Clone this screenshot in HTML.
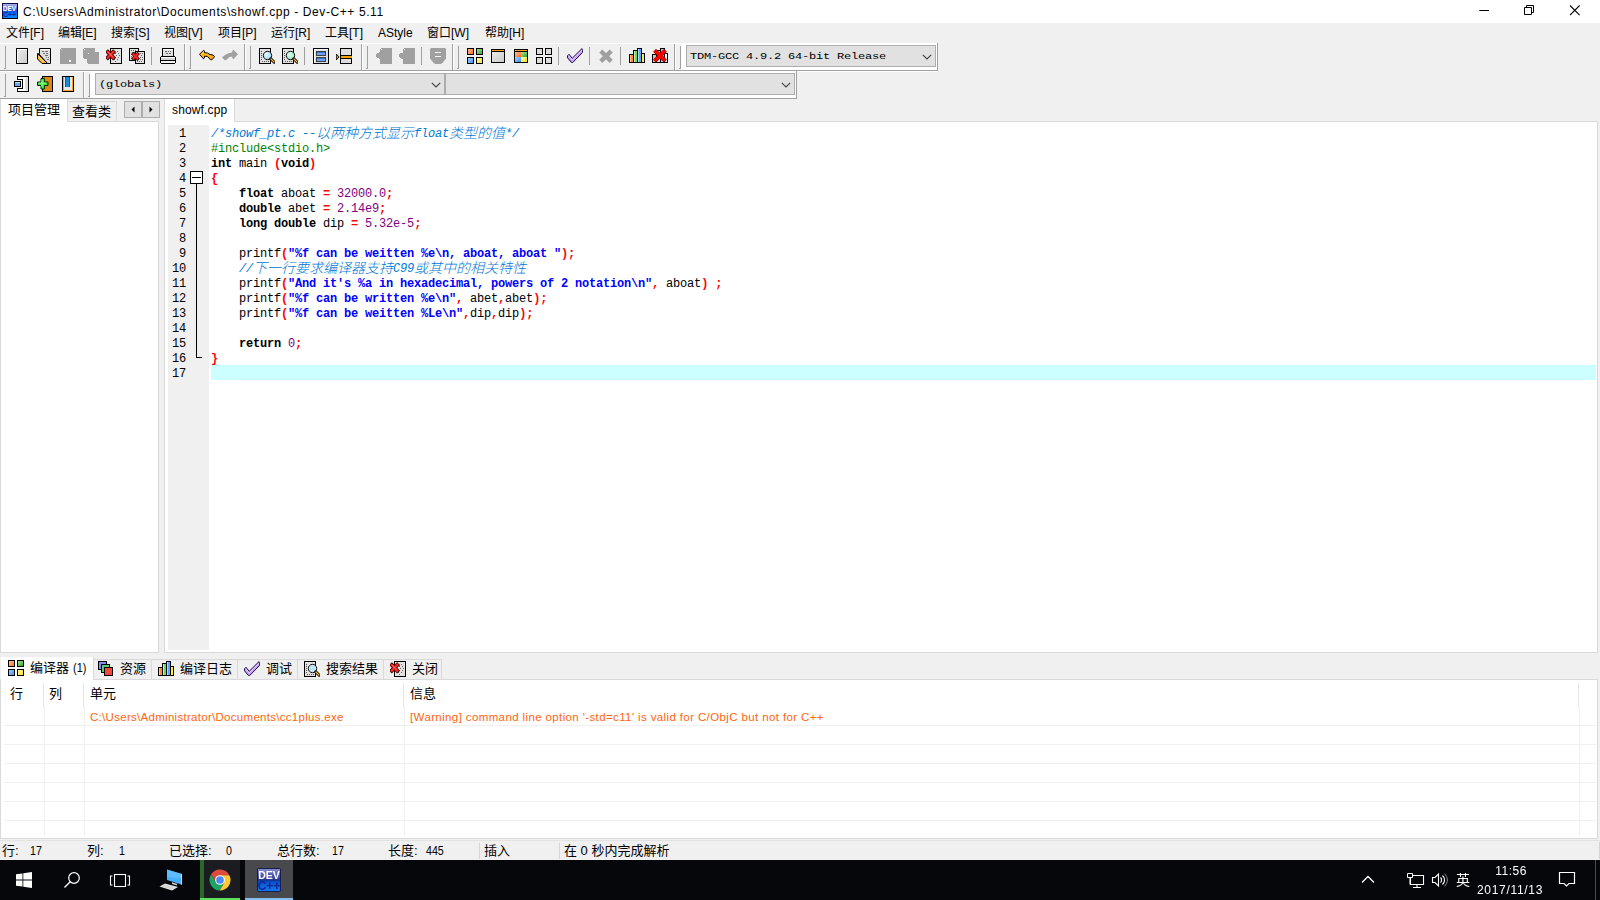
<!DOCTYPE html>
<html lang="zh-CN">
<head>
<meta charset="utf-8">
<title>Dev-C++ 5.11</title>
<style>
*{box-sizing:border-box;margin:0;padding:0}
html,body{width:1600px;height:900px;overflow:hidden;background:#f0f0f0}
body{position:relative;font-family:"Liberation Sans","Noto Sans CJK SC",sans-serif;font-size:12px;color:#000;line-height:1}
.abs{position:absolute}
.t{position:absolute;white-space:pre;line-height:16px;height:16px}
/* title bar */
#title{left:0;top:0;width:1600px;height:23px;background:#fff}
#title .t{left:23px;top:4px;font-size:12px;letter-spacing:0.6px}
/* menu */
#menu{left:0;top:23px;width:1600px;height:20px;background:#f0f0f0}
#menu .t{top:2px}
/* toolbars */
#tb1{left:0;top:43px;width:1600px;height:28px}
#tb2{left:0;top:71px;width:1600px;height:28px}
.hl{position:absolute;height:1px}
.vl{position:absolute;width:1px}
.grip{position:absolute;width:3px;height:23px}
.grip:before{content:"";position:absolute;left:1px;top:0;width:1px;height:22px;background:#a0a0a0}
.grip:after{content:"";position:absolute;left:0;top:22px;width:2px;height:1px;background:#a0a0a0}
.ico{position:absolute;width:16px;height:16px}
.combo{position:absolute;background:#e1e1e1;border:1px solid #adadad;font-family:"Liberation Mono",monospace;font-size:12px;letter-spacing:-0.2px}
.combo .t{left:3px;top:2px;transform:scaleY(0.82);transform-origin:0 12px}
.combo svg{position:absolute;right:3px;top:8px}
.frame{position:absolute;border:1px solid #a0a0a0;border-left-color:#fff;border-top-color:#fff;box-shadow:-1px -1px 0 #a0a0a0, 1px 1px 0 #fff}
/* panels */
.tab{position:absolute;font-size:13px}
.mono{font-family:"Liberation Mono","Noto Sans CJK SC",monospace}
/* code */
#code{left:211px;top:127px;font-family:"Liberation Mono","Noto Sans CJK SC",monospace;font-size:12px;letter-spacing:-0.2px;line-height:15px}
#code div{height:15px;white-space:pre}
#nums{left:168px;top:127px;width:18px;text-align:right;font-family:"Liberation Mono",monospace;font-size:12px;letter-spacing:-0.2px;line-height:15px}
#nums div{height:15px}
.k{font-weight:bold}
.s{color:#0000ff;font-weight:bold}
.y{color:#ff0000;font-weight:bold}
.n{color:#800080}
.p{color:#008000}
.c{color:#0078d7;font-style:italic}
.cj{line-height:0;font-weight:300;font-size:14px;letter-spacing:0;position:relative;top:1px;font-family:"Noto Sans CJK SC",sans-serif}
.bt{font-size:13px;line-height:17px;height:17px}
.itab{top:4px;height:21px;background:#f0f0f0;border:1px solid #d9d9d9;border-left:none}
.st{top:2px;font-size:13px;line-height:17px;height:17px}
.sn{font-size:13px;transform:scaleX(.82);transform-origin:0 0}
/* taskbar */
#task{left:0;top:860px;width:1600px;height:40px;background:#05070b;color:#fff;will-change:transform;transform:translateZ(0)}
</style>
</head>
<body>
<svg width="0" height="0" style="position:absolute"><defs>
<linearGradient id="sqo" x1="0" y1="0" x2="1" y2="1"><stop offset="0" stop-color="#ffc49a"/><stop offset="1" stop-color="#ff6a1a"/></linearGradient>
<linearGradient id="sqg" x1="0" y1="0" x2="1" y2="1"><stop offset="0" stop-color="#a8ec98"/><stop offset="1" stop-color="#2ca02c"/></linearGradient>
<linearGradient id="sqb" x1="0" y1="0" x2="1" y2="1"><stop offset="0" stop-color="#a8d4ff"/><stop offset="1" stop-color="#3c8cf0"/></linearGradient>
<linearGradient id="sqy" x1="0" y1="0" x2="1" y2="1"><stop offset="0" stop-color="#ffffa8"/><stop offset="1" stop-color="#f4e020"/></linearGradient>
</defs></svg>

<!-- TITLE BAR -->
<div id="title" class="abs">
  <svg class="abs" style="left:2px;top:3px" width="16" height="16" viewBox="0 0 16 16">
    <defs><linearGradient id="tg" x1="0" y1="0" x2="0" y2="1"><stop offset="0" stop-color="#b4b4ec"/><stop offset=".5" stop-color="#2046c0"/><stop offset=".55" stop-color="#1060e8"/><stop offset="1" stop-color="#1088ff"/></linearGradient></defs>
    <rect x="0" y="0" width="16" height="16" fill="#0c0c48"/><rect x="15" y="1" width="1" height="15" fill="#000"/><rect x="0" y="15" width="16" height="1" fill="#000"/>
    <rect x="1" y="1" width="14" height="14" fill="url(#tg)"/>
    <text x="7.500" y="7.600" font-family="Liberation Sans,sans-serif" font-weight="bold" font-size="6.500" fill="#fff" text-anchor="middle">DEV</text>
    <text x="7.500" y="14" font-family="Liberation Sans,sans-serif" font-weight="bold" font-size="7" fill="#0a2aa0" text-anchor="middle">C++</text>
  </svg>
  <div class="t">C:\Users\Administrator\Documents\showf.cpp - Dev-C++ 5.11</div>
  <svg class="abs" style="left:1470px;top:0" width="130" height="23" viewBox="0 0 130 23">
    <path d="M9.300 10.500h9.700" stroke="#000" stroke-width="1" fill="none"/>
    <path d="M54.5 7.5h7v7h-7z M56.5 7.5v-2h7v7h-2" stroke="#000" stroke-width="1" fill="none"/>
    <path d="M100 5.500l9.600 9.600 M109.600 5.500l-9.600 9.600" stroke="#000" stroke-width="1.1" fill="none"/>
  </svg>
</div>

<!-- MENU BAR -->
<div id="menu" class="abs">
  <div class="t" style="left:6px">文件[F]</div>
  <div class="t" style="left:58px">编辑[E]</div>
  <div class="t" style="left:111px">搜索[S]</div>
  <div class="t" style="left:164px">视图[V]</div>
  <div class="t" style="left:218px">项目[P]</div>
  <div class="t" style="left:271px">运行[R]</div>
  <div class="t" style="left:325px">工具[T]</div>
  <div class="t" style="left:378px">AStyle</div>
  <div class="t" style="left:427px">窗口[W]</div>
  <div class="t" style="left:485px">帮助[H]</div>
</div>

<!-- TOOLBARS -->
<div id="tb1" class="abs">
  <div class="hl" style="left:0;top:0;width:937px;background:#fff"></div>
  <div class="hl" style="left:0;top:27px;width:938px;background:#a0a0a0"></div>
  <!-- toolbar frames: right edges -->
  <div class="vl" style="left:184px;top:1px;height:26px;background:#a0a0a0"></div><div class="vl" style="left:185px;top:1px;height:26px;background:#fff"></div>
  <div class="vl" style="left:244px;top:1px;height:26px;background:#a0a0a0"></div><div class="vl" style="left:245px;top:1px;height:26px;background:#fff"></div>
  <div class="vl" style="left:361px;top:1px;height:26px;background:#a0a0a0"></div><div class="vl" style="left:362px;top:1px;height:26px;background:#fff"></div>
  <div class="vl" style="left:452px;top:1px;height:26px;background:#a0a0a0"></div><div class="vl" style="left:453px;top:1px;height:26px;background:#fff"></div>
  <div class="vl" style="left:674px;top:1px;height:26px;background:#a0a0a0"></div><div class="vl" style="left:675px;top:1px;height:26px;background:#fff"></div>
  <div class="vl" style="left:937px;top:0;height:28px;background:#a0a0a0"></div>
  <!-- grips -->
  <div class="grip" style="left:4px;top:3px"></div>
  <div class="grip" style="left:189px;top:3px"></div>
  <div class="grip" style="left:249px;top:3px"></div>
  <div class="grip" style="left:366px;top:3px"></div>
  <div class="grip" style="left:457px;top:3px"></div>
  <div class="grip" style="left:679px;top:3px"></div>
  <!-- separators -->
  <div class="vl" style="left:151px;top:4px;height:18px;background:#a0a0a0"></div>
  <div class="vl" style="left:304px;top:4px;height:18px;background:#a0a0a0"></div>
  <div class="vl" style="left:421px;top:4px;height:18px;background:#a0a0a0"></div>
  <div class="vl" style="left:558px;top:4px;height:18px;background:#a0a0a0"></div>
  <div class="vl" style="left:589px;top:4px;height:18px;background:#a0a0a0"></div>
  <div class="vl" style="left:620px;top:4px;height:18px;background:#a0a0a0"></div>

  <!-- 1 new -->
  <svg class="ico" style="left:14px;top:5px" viewBox="0 0 16 16" shape-rendering="crispEdges">
    <defs><linearGradient id="gp" x1="0" y1="0" x2="1" y2="1"><stop offset="0" stop-color="#ececec"/><stop offset=".5" stop-color="#dcdcdc"/><stop offset="1" stop-color="#cccccc"/></linearGradient></defs>
    <rect x="2.500" y=".5" width="11" height="15" fill="url(#gp)" stroke="#000"/><path d="M3.500 14.500V1.500H12.500" fill="none" stroke="#fff"/>
  </svg>
  <!-- 2 open -->
  <svg class="ico" style="left:36px;top:5px" viewBox="0 0 16 16">
    <path d="M3.500 .5H14.500V15.500H11.500L2.500 5.500H3.500z" fill="#dedede" stroke="#000"/><path d="M4.500 1.500H13.500" stroke="#fff"/>
    <path d="M1.500 5.500L11.500 15.500H6L1.500 11z" fill="#ffb030" stroke="#000" stroke-linejoin="round"/><path d="M2.600 8.500L8 14.200" stroke="#ffe090" stroke-width="1"/>
    <path d="M6 3.500h2M9 3.500h3M7 5.500h2M10 5.500h2M9 7.500h3M10 9.500h1M12 9.500h1M11 11.500h2" stroke="#707070" stroke-width="1"/>
  </svg>
  <!-- 3 save (disabled) -->
  <svg class="ico" style="left:60px;top:5px" viewBox="0 0 16 16" shape-rendering="crispEdges">
    <path d="M1 0h15v16H1V2z" fill="#a0a0a0"/><rect x="0" y="1" width="1" height="15" fill="#a0a0a0"/>
    <rect x="1" y="1" width="1" height="1" fill="#d8d8d8"/><rect x="9" y="12" width="2" height="2" fill="#fff"/>
  </svg>
  <!-- 4 save all (disabled) -->
  <svg class="ico" style="left:83px;top:5px" viewBox="0 0 16 16" shape-rendering="crispEdges">
    <path d="M1 0h11v4h4v12H5v-1H4v-4H1v-1H0V1z" fill="#a0a0a0"/>
    <rect x="1" y="1" width="1" height="1" fill="#e8e8e8"/><rect x="5" y="5" width="1" height="1" fill="#f4f4f4"/>
  </svg>
  <!-- 5 close -->
  <svg class="ico" style="left:106px;top:5px" viewBox="0 0 16 16">
    <rect x="4.500" y=".5" width="11" height="15" fill="#e2e2e2" stroke="#000"/>
    <path d="M8 3.500h2M11 3.500h2M9 5.500h2M12 5.500h2M10 7.500h2M13 7.500h1M9 9.500h2M12 9.500h2M8 11.500h2M11 11.500h2M9 13.500h2" stroke="#666" stroke-dasharray="1 1"/>
    <path d="M1.800 4l5.400 5.600M7.200 4L1.800 9.600" stroke="#400000" stroke-width="4" stroke-linecap="square"/><path d="M1.800 4l5.400 5.600M7.200 4L1.800 9.600" stroke="#ff2626" stroke-width="2.300" stroke-linecap="square"/><path d="M2.500 4.200l4 4.200" stroke="#ff9a9a" stroke-width=".8"/>
  </svg>
  <!-- 6 close all -->
  <svg class="ico" style="left:129px;top:5px" viewBox="0 0 16 16">
    <rect x=".5" y=".5" width="9" height="12" fill="#e2e2e2" stroke="#000"/>
    <path d="M2 2.500h6M3 4.500h5M2 6.500h3M2 8.500h2M2 10.500h4" stroke="#666" stroke-dasharray="1 1"/>
    <rect x="6.500" y="3.500" width="9" height="12" fill="#e2e2e2" stroke="#000"/>
    <path d="M11 5.500h3M12 7.500h2M11 9.500h3M9 11.500h5M8 13.500h6" stroke="#666" stroke-dasharray="1 1"/>
    <path d="M4.500 6.200l4 4.300M8.500 6.200l-4 4.300" stroke="#400000" stroke-width="3.400" stroke-linecap="square"/><path d="M4.500 6.200l4 4.300M8.500 6.200l-4 4.300" stroke="#ff2626" stroke-width="1.900" stroke-linecap="square"/>
  </svg>
  <!-- 7 print -->
  <svg class="ico" style="left:160px;top:5px" viewBox="0 0 16 16" shape-rendering="crispEdges">
    <rect x="2.500" y=".5" width="11" height="8" fill="#e0e0e0" stroke="#000"/><rect x="3" y="1" width="10" height="1" fill="#fff"/>
    <path d="M5 3.500h2M8 3.500h1M10 3.500h1M6 5.500h2M9 5.500h2" stroke="#666"/>
    <path d="M1 8h14v1h1v6h-1v1H1v-1H0V9h1z" fill="#000"/>
    <rect x="1" y="9" width="14" height="1" fill="#fff"/><rect x="1" y="10" width="14" height="2" fill="#d4d4d4"/><rect x="1" y="13" width="14" height="2" fill="#f4f4f4"/>
  </svg>
  <!-- undo -->
  <svg class="ico" style="left:199px;top:5px" viewBox="0 0 16 16">
    <defs><linearGradient id="ug" x1="0" y1="0" x2="0" y2="1"><stop offset="0" stop-color="#ffd24a"/><stop offset="1" stop-color="#ff9a00"/></linearGradient></defs><path d="M.5 6.300L4.600 2.200l.9.900v1.600l3 .3 2.500 1.500 3 .5 1.600 1.700-2.800 3.100-1.500-.2-2.800-3.200-3-.2v1.800l-.9.900z" fill="url(#ug)" stroke="#000" stroke-width="1" stroke-linejoin="round"/>
  </svg>
  <!-- redo (disabled) -->
  <svg class="ico" style="left:222px;top:5px" viewBox="0 0 16 16">
    <path d="M16 6.300L11.400 1.700l-1.100 1.100v1.800l-3.300.4-4 2L0 9.200 2.700 12.300l1.800-.6 3-2.800 2.800-.5v1.800l1.100 1.100z" fill="#a0a0a0"/>
  </svg>
  <!-- find -->
  <svg class="ico" style="left:259px;top:5px" viewBox="0 0 16 16">
    <defs><radialGradient id="lens" cx=".4" cy=".4" r=".7"><stop offset="0" stop-color="#e8fbff"/><stop offset="1" stop-color="#8fd0f0"/></radialGradient>
    <radialGradient id="lens2" cx=".4" cy=".4" r=".7"><stop offset="0" stop-color="#e8fff4"/><stop offset="1" stop-color="#84e0b0"/></radialGradient></defs>
    <rect x=".5" y=".5" width="11" height="15" fill="#e2e2e2" stroke="#000"/>
    <path d="M2 3.500h2M2 5.500h1M2 7.500h1M2 9.500h1M2 11.500h2M3 13.500h7" stroke="#555" stroke-dasharray="1 1"/>
    <circle cx="8.500" cy="7.500" r="4.200" fill="url(#lens)" stroke="#111" stroke-width="1"/>
    <path d="M11.800 10.800l3.400 3.400" stroke="#000" stroke-width="3" stroke-linecap="round"/><path d="M12 11l3 3" stroke="#ffb02e" stroke-width="1.300" stroke-linecap="round"/>
  </svg>
  <!-- replace -->
  <svg class="ico" style="left:282px;top:5px" viewBox="0 0 16 16">
    <rect x=".5" y=".5" width="11" height="15" fill="#e2e2e2" stroke="#000"/>
    <path d="M2 3.500h2M2 5.500h1M2 7.500h1M2 9.500h1M2 11.500h2M3 13.500h7" stroke="#555" stroke-dasharray="1 1"/>
    <circle cx="8.500" cy="7.500" r="4.200" fill="url(#lens2)" stroke="#111" stroke-width="1"/>
    <path d="M11.800 10.800l3.400 3.400" stroke="#000" stroke-width="3" stroke-linecap="round"/><path d="M12 11l3 3" stroke="#ffb02e" stroke-width="1.300" stroke-linecap="round"/>
  </svg>
  <!-- list -->
  <svg class="ico" style="left:313px;top:5px" viewBox="0 0 16 16" shape-rendering="crispEdges">
    <rect x=".5" y=".5" width="15" height="15" fill="#dcdcdc" stroke="#000"/><rect x="1" y="1" width="14" height="1" fill="#fff"/><rect x="1" y="1" width="1" height="14" fill="#fff"/>
    <rect x="3.500" y="3.500" width="9" height="4" fill="#6aa2f4" stroke="#404040"/><rect x="4" y="4" width="8" height="1" fill="#3a72dc"/>
    <rect x="3.500" y="9.500" width="9" height="4" fill="#6aa2f4" stroke="#404040"/><rect x="4" y="10" width="8" height="1" fill="#3a72dc"/>
  </svg>
  <!-- goto line -->
  <svg class="ico" style="left:336px;top:5px" viewBox="0 0 16 16">
    <rect x="4.500" y=".5" width="11" height="15" fill="#dcdcdc" stroke="#000"/>
    <rect x="4" y="7" width="12" height="4" fill="#000"/><rect x="5" y="8" width="11" height="2" fill="#f5a300"/>
    <path d="M.3 6l2.700 3-2.700 3z" fill="#f5a300" stroke="#000" stroke-width=".9"/>
  </svg>
  <!-- gray arrows -->
  <svg class="ico" style="left:376px;top:5px" viewBox="0 0 16 16" shape-rendering="crispEdges">
    <path d="M5 0h11v16H4v-4L2 10 0 8.500v-2L2 5l2-2V1z" fill="#a0a0a0"/><rect x="5" y="1" width="1" height="1" fill="#f4f4f4"/>
  </svg>
  <svg class="ico" style="left:399px;top:5px" viewBox="0 0 16 16" shape-rendering="crispEdges">
    <path d="M5 0h11v16H4v-5.500H2L0 9V6.500L2 5h2V1z" fill="#a0a0a0"/><rect x="5" y="1" width="1" height="1" fill="#f4f4f4"/>
  </svg>
  <svg class="ico" style="left:430px;top:5px" viewBox="0 0 16 16">
    <path d="M1 0h14l1 1v9.500L12.500 15l-2 1h-5l-2-1L0 10.500V1z" fill="#a0a0a0"/>
    <rect x="5" y="4" width="6" height="1" fill="#f4f4f4"/><rect x="5" y="8" width="6" height="1" fill="#f4f4f4"/>
  </svg>
  <!-- four colored squares -->
  <svg class="ico" style="left:467px;top:5px" viewBox="0 0 16 16" shape-rendering="crispEdges">
    <rect x=".5" y=".5" width="6" height="6" fill="url(#sqo)" stroke="#000"/><rect x="9.500" y=".5" width="6" height="6" fill="url(#sqg)" stroke="#000"/>
    <rect x=".5" y="9.500" width="6" height="6" fill="url(#sqb)" stroke="#000"/><rect x="9.500" y="9.500" width="6" height="6" fill="url(#sqy)" stroke="#000"/>
  </svg>
  <!-- window -->
  <svg class="ico" style="left:490px;top:5px" viewBox="0 0 16 16" shape-rendering="crispEdges">
    <rect x="1.500" y="1.500" width="13" height="13" fill="url(#gp)" stroke="#000"/><rect x="2" y="2" width="12" height="1" fill="#ffa01e"/><rect x="2" y="3" width="12" height="1" fill="#000"/>
  </svg>
  <!-- colored window -->
  <svg class="ico" style="left:513px;top:5px" viewBox="0 0 16 16" shape-rendering="crispEdges">
    <rect x="1.500" y="1.500" width="13" height="13" fill="#fff" stroke="#000"/><rect x="2" y="2" width="12" height="1" fill="#ffa01e"/><rect x="2" y="3" width="12" height="1" fill="#000"/>
    <rect x="2" y="4" width="6" height="5" fill="url(#sqo)"/><rect x="8" y="4" width="6" height="5" fill="url(#sqg)"/>
    <rect x="2" y="9" width="6" height="5" fill="url(#sqb)"/><rect x="8" y="9" width="6" height="5" fill="url(#sqy)"/>
  </svg>
  <!-- four gray squares -->
  <svg class="ico" style="left:536px;top:5px" viewBox="0 0 16 16" shape-rendering="crispEdges">
    <rect x=".5" y=".5" width="6" height="6" fill="#dcdcdc" stroke="#000"/><rect x="9.500" y=".5" width="6" height="6" fill="#dcdcdc" stroke="#000"/>
    <rect x=".5" y="9.500" width="6" height="6" fill="#dcdcdc" stroke="#000"/><rect x="9.500" y="9.500" width="6" height="6" fill="#dcdcdc" stroke="#000"/>
  </svg>
  <!-- check -->
  <svg class="ico" style="left:567px;top:5px" viewBox="0 0 16 16">
    <path d="M.5 7.800L2 6.300l3.200 4L15 .6l.7.700v3L5.700 14.500H4.500L.5 9.800z" fill="#c8a0ff" stroke="#1a0840" stroke-width="1" stroke-linejoin="round"/><path d="M1.800 7.600l3.300 4.200L15 2" fill="none" stroke="#e8d8ff" stroke-width=".9"/>
  </svg>
  <!-- gray X -->
  <svg class="ico" style="left:598px;top:5px" viewBox="0 0 16 16">
    <path d="M2.800 3l10.400 10.400M13.200 3L2.800 13.400" stroke="#a0a0a0" stroke-width="4.400"/>
  </svg>
  <!-- chart -->
  <svg class="ico" style="left:629px;top:5px" viewBox="0 0 16 16" shape-rendering="crispEdges">
    <rect x=".5" y="6.500" width="4" height="8" fill="#ff8a3c" stroke="#000"/><rect x="4.500" y="2.500" width="4" height="12" fill="#6cd85c" stroke="#000"/>
    <rect x="8.500" y=".5" width="4" height="14" fill="#5aa8ff" stroke="#000"/><rect x="12.500" y="5.500" width="3" height="9" fill="#ffef3c" stroke="#000"/>
    <rect x="1" y="7" width="1" height="7" fill="#ffc090"/><rect x="5" y="3" width="1" height="11" fill="#c0f4b0"/><rect x="9" y="1" width="1" height="13" fill="#b0d8ff"/>
  </svg>
  <!-- chart with red X -->
  <svg class="ico" style="left:652px;top:5px" viewBox="0 0 16 16">
    <g shape-rendering="crispEdges"><rect x=".5" y="6.500" width="4" height="8" fill="#c8c8c8" stroke="#000"/><rect x="4.500" y="2.500" width="4" height="12" fill="#e8e8e8" stroke="#000"/>
    <rect x="8.500" y=".5" width="4" height="14" fill="#c8c8c8" stroke="#000"/><rect x="12.500" y="5.500" width="3" height="9" fill="#f4f4f4" stroke="#000"/></g>
    <path d="M4 3.800l8 7.800M12 3.800l-8 7.800" stroke="#8a0000" stroke-width="4.100" stroke-linecap="square"/><path d="M4 3.800l8 7.800M12 3.800l-8 7.800" stroke="#ff0000" stroke-width="3.100" stroke-linecap="square"/>
  </svg>
  <!-- compiler combo -->
  <div class="abs" style="left:681px;top:0;width:256px;height:27px;background:#fff"></div>
  <div class="combo" style="left:686px;top:2px;width:250px;height:22px"><div class="t">TDM-GCC 4.9.2 64-bit Release</div>
    <svg width="10" height="6" viewBox="0 0 10 6"><path d="M.8 .8L5 5 9.200 .8" fill="none" stroke="#404040" stroke-width="1.100"/></svg></div>
</div>

<div id="tb2" class="abs">
  <div class="hl" style="left:0;top:0;width:938px;background:#fff"></div>
  <div class="hl" style="left:0;top:27px;width:797px;background:#a0a0a0"></div>
  <div class="vl" style="left:83px;top:1px;height:26px;background:#a0a0a0"></div><div class="vl" style="left:84px;top:1px;height:26px;background:#fff"></div>
  <div class="vl" style="left:796px;top:0px;height:28px;background:#a0a0a0"></div>
  <div class="grip" style="left:4px;top:3px"></div>
  <div class="grip" style="left:88px;top:3px"></div>
  <!-- project icons -->
  <svg class="ico" style="left:14px;top:5px" viewBox="0 0 16 16" shape-rendering="crispEdges">
    <path d="M3.500 .5h11v15h-11v-3h5v-9h-5z" fill="#dcdcdc" stroke="#000"/><rect x="4" y="1" width="8" height="2" fill="#fff"/><rect x="4" y="13" width="8" height="2" fill="#fff"/><rect x="9" y="3" width="2" height="10" fill="#fff"/>
    <rect x=".5" y="5.500" width="6" height="5" fill="#6aa8f4" stroke="#000"/><rect x="1" y="6" width="5" height="1" fill="#c0dcff"/>
  </svg>
  <svg class="ico" style="left:37px;top:5px" viewBox="0 0 16 16">
    <rect x="5.500" y=".5" width="10" height="15" fill="#d9861a" stroke="#000"/>
    <path d="M4 2.500h3.500v3.500h3.500v3.500H7.500v3.500H4V9.500H.5V6H4z" fill="#40e040" stroke="#003000" stroke-width="1" stroke-linejoin="round"/><path d="M5 4v7M2 7.200h7" stroke="#a8ffa0" stroke-width=".9" fill="none"/>
  </svg>
  <svg class="ico" style="left:60px;top:5px" viewBox="0 0 16 16" shape-rendering="crispEdges">
    <rect x="2.500" y=".5" width="11" height="15" fill="#e8e8e8" stroke="#000"/>
    <rect x="3" y="1" width="1" height="14" fill="#ffa01e"/><rect x="12" y="1" width="1" height="14" fill="#ffa01e"/><rect x="3" y="14" width="10" height="1" fill="#ffa01e"/>
    <rect x="5" y="1" width="5" height="10" fill="#1a8ad8"/><rect x="5" y="1" width="1" height="10" fill="#0a5aa0"/><rect x="9" y="1" width="1" height="10" fill="#0a5aa0"/>
  </svg>
  <div class="abs" style="left:90px;top:0;width:706px;height:27px;background:#fff"></div>
  <div class="combo" style="left:95px;top:2px;width:350px;height:22px"><div class="t">(globals)</div>
    <svg width="10" height="6" viewBox="0 0 10 6"><path d="M.8 .8L5 5 9.200 .8" fill="none" stroke="#404040" stroke-width="1.100"/></svg></div>
  <div class="combo" style="left:445px;top:2px;width:350px;height:22px">
    <svg width="10" height="6" viewBox="0 0 10 6"><path d="M.8 .8L5 5 9.200 .8" fill="none" stroke="#404040" stroke-width="1.100"/></svg></div>
</div>

<!-- LEFT PANEL -->
<div id="left" class="abs" style="left:0;top:99px;width:160px;height:555px">
  <!-- content box -->
  <div class="abs" style="left:0;top:22px;width:159px;height:532px;background:#fff;border:1px solid #d9d9d9"></div>
  <!-- active tab -->
  <div class="abs" style="left:0;top:0;width:68px;height:23px;background:#fff;border-right:1px solid #d9d9d9;border-left:1px solid #d9d9d9"></div>
  <div class="t" style="left:8px;top:2px;font-size:13px;line-height:17px;height:17px">项目管理</div>
  <!-- inactive tab -->
  <div class="abs" style="left:68px;top:2px;width:49px;height:20px;background:#f0f0f0;border:1px solid #d9d9d9;border-left:none;border-bottom:none"></div>
  <div class="t" style="left:72px;top:4px;font-size:13px;line-height:17px;height:17px">查看类</div>
  <!-- nav buttons -->
  <div class="abs" style="left:124px;top:2px;width:18px;height:17px;background:#e1e1e1;border:1px solid #adadad"></div>
  <div class="abs" style="left:142px;top:2px;width:18px;height:17px;background:#e1e1e1;border:1px solid #adadad"></div>
  <svg class="abs" style="left:124px;top:2px" width="36" height="17" viewBox="0 0 36 17"><path d="M7.500 8.500l3-3v6z M28.500 8.500l-3-3v6z" fill="#000"/></svg>
</div>

<div id="editor" class="abs" style="left:164px;top:99px;width:1434px;height:555px">
  <!-- page box -->
  <div class="abs" style="left:0;top:22px;width:1434px;height:532px;background:#fff;border:1px solid #d9d9d9"></div>
  <!-- tab -->
  <div class="abs" style="left:0;top:0;width:71px;height:23px;background:#fff;border-right:1px solid #d9d9d9;border-left:1px solid #dcdcdc"></div>
  <div class="t" style="left:8px;top:3px;letter-spacing:0.15px">showf.cpp</div>
</div>
<!-- gutter -->
<div class="abs" style="left:168px;top:125px;width:41px;height:525px;background:#f0f0f0"></div>
<!-- current line highlight -->
<div class="abs" style="left:211px;top:365px;width:1385px;height:15px;background:#ccffff"></div>
<!-- fold marks -->
<div class="abs" style="left:190px;top:171px;width:13px;height:13px;border:1px solid #000;background:#fff"></div>
<div class="abs" style="left:192px;top:177px;width:9px;height:1px;background:#000"></div>
<div class="abs" style="left:196px;top:184px;width:1px;height:174px;background:#000"></div>
<div class="abs" style="left:196px;top:357px;width:6px;height:1px;background:#000"></div>
<div id="nums" class="abs"><div>1</div><div>2</div><div>3</div><div>4</div><div>5</div><div>6</div><div>7</div><div>8</div><div>9</div><div>10</div><div>11</div><div>12</div><div>13</div><div>14</div><div>15</div><div>16</div><div>17</div></div>
<div id="code" class="abs"><div class="c">/*showf_pt.c --<span class="cj">以两种方式显示</span>float<span class="cj">类型的值</span>*/</div>
<div class="p">#include&lt;stdio.h&gt;</div>
<div><span class="k">int</span> main <span class="y">(</span><span class="k">void</span><span class="y">)</span></div>
<div><span class="y">{</span></div>
<div>    <span class="k">float</span> aboat <span class="y">=</span> <span class="n">32000.0</span><span class="y">;</span></div>
<div>    <span class="k">double</span> abet <span class="y">=</span> <span class="n">2.14e9</span><span class="y">;</span></div>
<div>    <span class="k">long</span> <span class="k">double</span> dip <span class="y">=</span> <span class="n">5.32e-5</span><span class="y">;</span></div>
<div> </div>
<div>    printf<span class="y">(</span><span class="s">"%f can be weitten %e\n, aboat, aboat "</span><span class="y">);</span></div>
<div class="c">    //<span class="cj">下一行要求编译器支持</span>C99<span class="cj">或其中的相关特性</span></div>
<div>    printf<span class="y">(</span><span class="s">"And it's %a in hexadecimal, powers of 2 notation\n"</span><span class="y">,</span> aboat<span class="y">)</span> <span class="y">;</span></div>
<div>    printf<span class="y">(</span><span class="s">"%f can be written %e\n"</span><span class="y">,</span> abet<span class="y">,</span>abet<span class="y">);</span></div>
<div>    printf<span class="y">(</span><span class="s">"%f can be weitten %Le\n"</span><span class="y">,</span>dip<span class="y">,</span>dip<span class="y">);</span></div>
<div> </div>
<div>    <span class="k">return</span> <span class="n">0</span><span class="y">;</span></div>
<div><span class="y">}</span></div>
<div> </div></div>

<!-- BOTTOM PANEL -->
<div id="bottom" class="abs" style="left:0;top:655px;width:1600px;height:185px">
  <!-- list box -->
  <div class="abs" style="left:0;top:24px;width:1598px;height:160px;background:#fff;border:1px solid #d9d9d9"></div>
  <!-- active tab -->
  <div class="abs" style="left:1px;top:2px;width:93px;height:23px;background:#fff;border-right:1px solid #d9d9d9"></div>
  <svg class="ico" style="left:8px;top:5px" viewBox="0 0 16 16" shape-rendering="crispEdges">
    <rect x=".5" y=".5" width="6" height="6" fill="url(#sqo)" stroke="#000"/><rect x="9.500" y=".5" width="6" height="6" fill="url(#sqg)" stroke="#000"/>
    <rect x=".5" y="9.500" width="6" height="6" fill="url(#sqb)" stroke="#000"/><rect x="9.500" y="9.500" width="6" height="6" fill="url(#sqy)" stroke="#000"/>
  </svg>
  <div class="t bt" style="left:30px;top:4px">编译器 <span style="display:inline-block;transform:scaleX(.84);transform-origin:0 50%">(1)</span></div>
  <!-- tab 2 -->
  <div class="abs itab" style="left:94px;width:58px"></div>
  <svg class="ico" style="left:98px;top:6px" viewBox="0 0 16 16" shape-rendering="crispEdges">
    <rect x=".5" y=".5" width="8" height="8" fill="#8a8af0" stroke="#000"/><rect x="3.500" y="3.500" width="8" height="8" fill="#58c878" stroke="#000"/>
    <rect x="6.500" y="6.500" width="8" height="8" fill="#f04a3c" stroke="#000"/>
  </svg>
  <div class="t bt" style="left:120px;top:5px">资源</div>
  <!-- tab 3 -->
  <div class="abs itab" style="left:152px;width:86px"></div>
  <svg class="ico" style="left:158px;top:6px" viewBox="0 0 16 16" shape-rendering="crispEdges">
    <rect x=".5" y="6.500" width="4" height="8" fill="#ff8a3c" stroke="#000"/><rect x="4.500" y="2.500" width="4" height="12" fill="#6cd85c" stroke="#000"/>
    <rect x="8.500" y=".5" width="4" height="14" fill="#5aa8ff" stroke="#000"/><rect x="12.500" y="5.500" width="3" height="9" fill="#ffef3c" stroke="#000"/>
    <rect x="1" y="7" width="1" height="7" fill="#ffc090"/><rect x="5" y="3" width="1" height="11" fill="#c0f4b0"/><rect x="9" y="1" width="1" height="13" fill="#b0d8ff"/>
  </svg>
  <div class="t bt" style="left:180px;top:5px">编译日志</div>
  <!-- tab 4 -->
  <div class="abs itab" style="left:238px;width:60px"></div>
  <svg class="ico" style="left:244px;top:6px" viewBox="0 0 16 16">
    <path d="M.5 7.800L2 6.300l3.200 4L15 .6l.7.700v3L5.700 14.500H4.500L.5 9.800z" fill="#c8a0ff" stroke="#1a0840" stroke-width="1" stroke-linejoin="round"/><path d="M1.800 7.600l3.300 4.200L15 2" fill="none" stroke="#e8d8ff" stroke-width=".9"/>
  </svg>
  <div class="t bt" style="left:266px;top:5px">调试</div>
  <!-- tab 5 -->
  <div class="abs itab" style="left:298px;width:86px"></div>
  <svg class="ico" style="left:304px;top:6px" viewBox="0 0 16 16">
    <rect x=".5" y=".5" width="11" height="15" fill="#e2e2e2" stroke="#000"/>
    <path d="M2 3.500h2M2 5.500h1M2 7.500h1M2 9.500h1M2 11.500h2M3 13.500h7" stroke="#555" stroke-dasharray="1 1"/>
    <circle cx="8.500" cy="7.500" r="4.200" fill="#bfe6f8" stroke="#111" stroke-width="1"/>
    <path d="M11.800 10.800l3.400 3.400" stroke="#000" stroke-width="3" stroke-linecap="round"/><path d="M12 11l3 3" stroke="#ffb02e" stroke-width="1.300" stroke-linecap="round"/>
  </svg>
  <div class="t bt" style="left:326px;top:5px">搜索结果</div>
  <!-- tab 6 -->
  <div class="abs itab" style="left:384px;width:58px"></div>
  <svg class="ico" style="left:390px;top:6px" viewBox="0 0 16 16">
    <rect x="4.500" y=".5" width="11" height="15" fill="#e2e2e2" stroke="#000"/>
    <path d="M8 3.500h2M11 3.500h2M9 5.500h2M12 5.500h2M10 7.500h2M13 7.500h1M9 9.500h2M12 9.500h2M8 11.500h2M11 11.500h2M9 13.500h2" stroke="#666" stroke-dasharray="1 1"/>
    <path d="M1.800 4l5.400 5.600M7.200 4L1.800 9.600" stroke="#400000" stroke-width="4" stroke-linecap="square"/><path d="M1.800 4l5.400 5.600M7.200 4L1.800 9.600" stroke="#ff2626" stroke-width="2.300" stroke-linecap="square"/><path d="M2.500 4.200l4 4.200" stroke="#ff9a9a" stroke-width=".8"/>
  </svg>
  <div class="t bt" style="left:412px;top:5px">关闭</div>

  <!-- header -->
  <div class="t bt" style="left:10px;top:30px">行</div>
  <div class="t bt" style="left:49px;top:30px">列</div>
  <div class="t bt" style="left:90px;top:30px">单元</div>
  <div class="t bt" style="left:410px;top:30px">信息</div>
  <div class="vl" style="left:43px;top:28px;height:24px;background:#e5e5e5"></div>
  <div class="vl" style="left:83px;top:28px;height:24px;background:#e5e5e5"></div>
  <div class="vl" style="left:403px;top:28px;height:24px;background:#e5e5e5"></div>
  <div class="vl" style="left:1578px;top:28px;height:24px;background:#e5e5e5"></div>
  <!-- grid -->
  <div class="vl" style="left:44px;top:52px;height:129px;background:#f0f0f0"></div>
  <div class="vl" style="left:84px;top:52px;height:129px;background:#f0f0f0"></div>
  <div class="vl" style="left:404px;top:52px;height:129px;background:#f0f0f0"></div>
  <div class="vl" style="left:1579px;top:52px;height:129px;background:#f0f0f0"></div>
  <div class="hl" style="left:4px;top:70px;width:1592px;background:#f0f0f0"></div>
  <div class="hl" style="left:4px;top:89px;width:1592px;background:#f0f0f0"></div>
  <div class="hl" style="left:4px;top:108px;width:1592px;background:#f0f0f0"></div>
  <div class="hl" style="left:4px;top:127px;width:1592px;background:#f0f0f0"></div>
  <div class="hl" style="left:4px;top:146px;width:1592px;background:#f0f0f0"></div>
  <div class="hl" style="left:4px;top:165px;width:1592px;background:#f0f0f0"></div>
  <!-- data row -->
  <div class="t" style="left:90px;top:54px;color:#ff6410;font-size:11.5px;letter-spacing:0.29px">C:\Users\Administrator\Documents\cc1plus.exe</div>
  <div class="t" style="left:410px;top:54px;color:#ff6410;font-size:11.5px;letter-spacing:0.38px">[Warning] command line option '-std=c11' is valid for C/ObjC but not for C++</div>
</div>

<!-- STATUS BAR -->
<div id="status" class="abs" style="left:0;top:840px;width:1600px;height:20px;background:#f0f0f0">
  <div class="hl" style="left:0;top:0;width:1600px;background:#e3e3e3"></div>
  <div class="t st" style="left:2px">行:</div><div class="t st sn" style="left:30px">17</div>
  <div class="t st" style="left:87px">列:</div><div class="t st sn" style="left:119px">1</div>
  <div class="t st" style="left:169px">已选择:</div><div class="t st sn" style="left:226px">0</div>
  <div class="t st" style="left:277px">总行数:</div><div class="t st sn" style="left:332px">17</div>
  <div class="t st" style="left:388px">长度:</div><div class="t st sn" style="left:426px">445</div>
  <div class="t st" style="left:484px">插入</div>
  <div class="t st" style="left:564px">在 0 秒内完成解析</div>
  <div class="vl" style="left:479px;top:3px;height:16px;background:#d7d7d7"></div>
  <div class="vl" style="left:559px;top:3px;height:16px;background:#d7d7d7"></div>
  <div class="vl" style="left:1599px;top:2px;height:17px;background:#d4d4d4"></div>
</div>

<!-- TASKBAR -->
<div id="task" class="abs">
  <!-- start -->
  <svg class="abs" style="left:16px;top:12px" width="16" height="16" viewBox="0 0 16 16"><path d="M0 2.300l6.500-.9v6.200H0z M7.300 1.300L16 0v7.600H7.300z M0 8.400h6.500v6.200L0 13.700z M7.300 8.400H16V16l-8.700-1.200z" fill="#fff"/></svg>
  <!-- search -->
  <svg class="abs" style="left:63px;top:11px" width="18" height="18" viewBox="0 0 18 18"><circle cx="11" cy="7" r="5.300" fill="none" stroke="#fff" stroke-width="1.200"/><path d="M7.200 10.800L1.500 16.500" stroke="#fff" stroke-width="1.300"/></svg>
  <!-- task view -->
  <svg class="abs" style="left:109px;top:11px" width="22" height="18" viewBox="0 0 22 18"><rect x="5.500" y="3.500" width="11" height="12" fill="none" stroke="#fff" stroke-width="1.100"/><path d="M3.500 5h-2v9h2M18.500 5h2v9h-2" fill="none" stroke="#fff" stroke-width="1.100"/></svg>
  <!-- pc icon -->
  <svg class="abs" style="left:158px;top:8px" width="26" height="24" viewBox="0 0 26 24">
    <path d="M9 1.400L24 6v10.800L9 12z" fill="#48b0f8"/><path d="M9 1.400L24 6v4L9 9z" fill="#6cc4ff" opacity=".6"/><path d="M23.300 5.800l.7.200v10.800l-.7-.2z" fill="#e8f4ff"/>
    <path d="M14 14.300l5 1.500v1.600l-5-1.500z" fill="#c8c8c8"/>
    <path d="M1.500 18.500L7 15.500l13 3.500-6 3.500z" fill="#e4e4e4"/><path d="M4 18.400l3-1.600 10 2.700-3 1.700z" fill="#c4c4c4" opacity=".5"/>
  </svg>
  <!-- chrome -->
  <div class="abs" style="left:200px;top:0;width:40px;height:40px;background:#1a1c20"></div>
  <div class="abs" style="left:200px;top:0;width:4px;height:38px;background:#2d662d"></div>
  <div class="abs" style="left:200px;top:38px;width:40px;height:2px;background:#5ee05e"></div>
  <svg class="abs" style="left:209px;top:9px" width="22" height="22" viewBox="0 0 24 24">
        <path d="M12 6.700L22.206 6.700A11.500 11.500 0 0 0 2.307 5.812L7.410 14.650L12 12z" fill="#de4a3c"/>
    <path d="M16.590 14.650L11.487 23.488A11.500 11.500 0 0 0 22.206 6.700L12 6.700L12 12z" fill="#fcc934"/>
    <path d="M7.410 14.650L2.307 5.812A11.500 11.500 0 0 0 11.487 23.488L16.590 14.650L12 12z" fill="#1ea362"/>
    <circle cx="12" cy="12" r="5.300" fill="#fff"/><circle cx="12" cy="12" r="4.200" fill="#4a8af4"/>
  </svg>
  <!-- dev-c++ -->
  <div class="abs" style="left:245px;top:0;width:48px;height:40px;background:#48494d"></div>
  <div class="abs" style="left:245px;top:38px;width:48px;height:2px;background:#85bdf0"></div>
  <svg class="abs" style="left:257px;top:8px" width="24" height="24" viewBox="0 0 24 24">
    <defs><linearGradient id="dg" x1="0" y1="0" x2="0" y2="1"><stop offset="0" stop-color="#8888cc"/><stop offset="1" stop-color="#22308c"/></linearGradient>
    <linearGradient id="dg2" x1="0" y1="0" x2="0" y2="1"><stop offset="0" stop-color="#0a48c0"/><stop offset="1" stop-color="#1478f0"/></linearGradient></defs>
    <rect x="0" y="0" width="24" height="24" rx="2" fill="#141c50"/><rect x="1" y="1" width="22" height="11.500" fill="url(#dg)"/><rect x="1" y="12.500" width="22" height="10.500" fill="url(#dg2)"/>
    <text x="12" y="11" font-family="Liberation Sans,sans-serif" font-weight="bold" font-size="10.500" fill="#fff" text-anchor="middle">DEV</text>
    <text x="12" y="22" font-family="Liberation Sans,sans-serif" font-weight="bold" font-size="12" fill="#0a2a98" text-anchor="middle">C++</text>
  </svg>
  <!-- tray -->
  <svg class="abs" style="left:1361px;top:15px" width="14" height="9" viewBox="0 0 14 9"><path d="M1 7.500L7 1.500l6 6" fill="none" stroke="#fff" stroke-width="1.300"/></svg>
  <svg class="abs" style="left:1407px;top:12px" width="18" height="16" viewBox="0 0 18 16"><path d="M3.500 3.500h13v9h-13z M10 12.500v2.500 M6 15.500h8" fill="none" stroke="#fff" stroke-width="1.100"/><path d="M.5 1.500h5v4h-5z M3 5.500v7" fill="#05070b" stroke="#fff" stroke-width="1"/></svg>
  <svg class="abs" style="left:1431px;top:12px" width="18" height="16" viewBox="0 0 18 16"><path d="M1.500 5.500h2.500l3.500-3.500v12L4 10.500H1.500z" fill="none" stroke="#fff" stroke-width="1.100"/><path d="M9.500 5.500a3.500 3.500 0 0 1 0 5 M11.500 3.500a6 6 0 0 1 0 9" fill="none" stroke="#fff" stroke-width="1.100"/><path d="M13.700 1.800a8.500 8.500 0 0 1 0 12.400" fill="none" stroke="#888" stroke-width="1"/></svg>
  <div class="t" style="left:1456px;top:12px;font-size:14px;color:#fff">英</div>
  <div class="t" style="left:1481px;top:3px;width:60px;text-align:center;color:#fff;letter-spacing:0.5px">11:56</div>
  <div class="t" style="left:1470px;top:22px;width:80px;text-align:center;color:#fff;letter-spacing:0.7px">2017/11/13</div>
  <svg class="abs" style="left:1558px;top:11px" width="18" height="18" viewBox="0 0 18 18"><path d="M1.500 1.500h15v11h-5.500l-2.500 2.500-2.500-2.500H1.500z" fill="none" stroke="#fff" stroke-width="1.200"/></svg>
  <div class="vl" style="left:1595px;top:0;height:40px;background:#4a4c50"></div>
</div>

</body>
</html>
